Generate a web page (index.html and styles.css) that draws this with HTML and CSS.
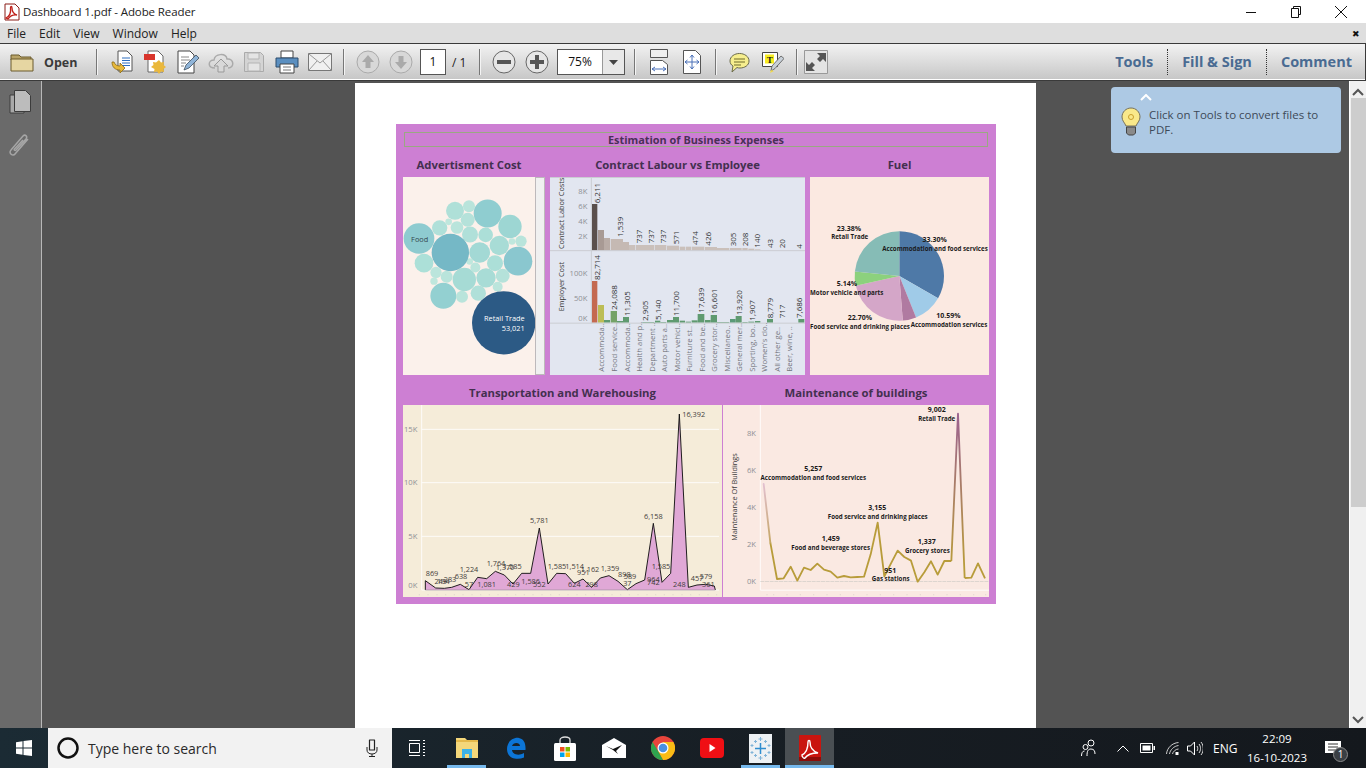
FILE: index.html
```html
<!DOCTYPE html>
<html lang="en">
<head>
    <meta charset="UTF-8">
    <meta name="viewport" content="width=device-width, initial-scale=1.0">
    <title>Dashboard 1.pdf - Adobe Reader</title>
    <link rel="stylesheet" href="styles.css">
</head>
<body>
    <div class="titlebar">
        <svg class="app-icon" viewBox="0 0 16 18" width="16" height="18">
            <path d="M1 1h10l4 4v12H1z" fill="#fff" stroke="#8a1c17"/>
            <path d="M2 15c4-2 5-6 4.500-10 0-2 1.500-2 1.500 0 0 4 2 6 5 7-4-.5-7 1-9 4z" fill="none" stroke="#c0201a" stroke-width="1.300"/>
        </svg>
        <span class="app-title">Dashboard 1.pdf - Adobe Reader</span>
        <div class="window-btns">
            <svg width="12" height="12" viewBox="0 0 12 12"><path d="M1 6.500h10" stroke="#111"/></svg>
            <svg width="12" height="12" viewBox="0 0 12 12"><path d="M3.500 2.500V.5h7v8h-2M1.500 2.500h7v9h-7z" fill="none" stroke="#111"/></svg>
            <svg width="14" height="14" viewBox="0 0 14 14"><path d="M1 1l12 12M13 1L1 13" stroke="#111"/></svg>
        </div>
    </div>

    <div class="menubar">
        <span>File</span><span>Edit</span><span>View</span><span>Window</span><span>Help</span>
        <span class="menu-close">&#10006;</span>
    </div>

    <div class="toolbar">
        <svg class="folder" width="24" height="20" viewBox="0 0 24 20">
            <path d="M1 3h8l2 2h10v3H1z" fill="#b9a468" stroke="#6b5a2c"/>
            <path d="M1 19V7h22v12z" fill="#e6d6a2" stroke="#6b5a2c"/>
        </svg>
        <span class="open-label">Open</span>
        <div class="sep"></div>
        <div class="btn-group first">
            <div class="tb-btn"><svg width="24" height="24" viewBox="0 0 24 24">
                <path d="M8 1h9l5 5v15H8z" fill="#fff" stroke="#555"/>
                <path d="M12 8h8M12 10.500h8M12 13h8M12 15.500h8" stroke="#2f6fc0"/>
                <path d="M2 12c0 5 3 8 8 8v3l5-5-5-5v3c-3 0-5-1-6-4z" fill="#e8b93a" stroke="#8b6a14" stroke-width=".8"/>
            </svg></div>
            <div class="tb-btn"><svg width="24" height="24" viewBox="0 0 24 24">
                <path d="M5 1h10l5 5v16H5z" fill="#fff" stroke="#666"/>
                <path d="M1 4h11v6H1z" fill="#d8352c"/>
                <path d="M16 10l2 2.500 3-.5-.5 3 2.500 2-2.500 2 .5 3-3-.5-2 2.500-2-2.500-3 .5.5-3L8 17l2.500-2-.5-3 3 .5z" fill="#eab83c"/>
            </svg></div>
            <div class="tb-btn"><svg width="24" height="24" viewBox="0 0 24 24">
                <path d="M2 1h12l4 4v18H2z" fill="#fff" stroke="#444"/>
                <path d="M5 7h8M5 10h9M5 13h5M5 16h3" stroke="#888"/>
                <path d="M8 20l2-5L20 5l3 3-10 10z" fill="#8fb4d8" stroke="#3c4c5c" stroke-width=".8"/>
            </svg></div>
            <div class="tb-btn"><svg width="26" height="24" viewBox="0 0 26 24">
                <path d="M7 18c-8 0-7-8-1-8 1-7 12-7 13-1 7-1 8 9 1 9" fill="none" stroke="#aaa" stroke-width="1.500"/>
                <path d="M13 9l-7 7h4v6h6v-6h4z" fill="#d8d8d8" stroke="#999"/>
            </svg></div>
            <div class="tb-btn"><svg width="22" height="24" viewBox="0 0 22 24">
                <path d="M1.500 2.500h16l3 3v16h-19z" fill="#d4d4d4" stroke="#aaa"/>
                <path d="M5 3h11v6H5zM5 13h12v8H5z" fill="#e4e4e4" stroke="#b4b4b4"/>
            </svg></div>
            <div class="tb-btn"><svg width="24" height="24" viewBox="0 0 24 24">
                <path d="M6 1h12v7H6z" fill="#fff" stroke="#444"/>
                <path d="M1 8h22v9H1z" fill="#5b8fc0" stroke="#2c4c6c"/>
                <path d="M5 14h14v9H5z" fill="#fff" stroke="#444"/>
                <path d="M8 17h8M8 20h8" stroke="#777"/>
            </svg></div>
            <div class="tb-btn"><svg width="24" height="18" viewBox="0 0 24 18">
                <path d="M.5.5h23v17H.5z" fill="#f0f0f0" stroke="#777"/>
                <path d="M1 1l11 9 11-9M1 17l8-9M23 17l-8-9" fill="none" stroke="#999"/>
            </svg></div>
        </div>
        <div class="sep"></div>
        <div class="btn-group">
            <div class="tb-btn"><svg width="24" height="24" viewBox="0 0 24 24"><circle cx="12" cy="12" r="11" fill="#d8d8d8" stroke="#aaa"/><path d="M12 5l-6 7h3.500v6h5v-6H18z" fill="#aaa"/></svg></div>
            <div class="tb-btn"><svg width="24" height="24" viewBox="0 0 24 24"><circle cx="12" cy="12" r="11" fill="#d8d8d8" stroke="#aaa"/><path d="M12 19l-6-7h3.500V6h5v6H18z" fill="#aaa"/></svg></div>
        </div>
        <div class="page-box">1</div>
        <span class="page-total">/ 1</span>
        <div class="sep"></div>
        <div class="btn-group">
            <div class="tb-btn"><svg width="24" height="24" viewBox="0 0 24 24"><circle cx="12" cy="12" r="11" fill="#e6e6e6" stroke="#666"/><path d="M5 10h14v4H5z" fill="#555"/></svg></div>
            <div class="tb-btn"><svg width="24" height="24" viewBox="0 0 24 24"><circle cx="12" cy="12" r="11" fill="#e6e6e6" stroke="#666"/><path d="M10 5h4v5h5v4h-5v5h-4v-5H5v-4h5z" fill="#555"/></svg></div>
        </div>
        <div class="zoom-box">
            <span class="zoom-value">75%</span>
            <span class="zoom-arrow"><svg width="9" height="5" viewBox="0 0 9 5"><path d="M0 0h9L4.500 5z" fill="#444"/></svg></span>
        </div>
        <div class="sep"></div>
        <div class="btn-group">
            <div class="tb-btn"><svg width="18" height="26" viewBox="0 0 18 26">
                <path d="M.5.5h17v8H.5z" fill="#eee" stroke="#555"/>
                <path d="M.5 11.500h12l5 4v10H.5z" fill="#fff" stroke="#555"/>
                <path d="M2 20h14M2 20l3-2M2 20l3 2M16 20l-3-2M16 20l-3 2" stroke="#4a70b8" fill="none"/>
            </svg></div>
            <div class="tb-btn"><svg width="18" height="24" viewBox="0 0 18 24">
                <path d="M.5.5h12l5 5v18H.5z" fill="#fff" stroke="#555"/>
                <path d="M9 5v14M2 12h14M9 5L7 7.500M9 5l2 2.500M9 19l-2-2.500M9 19l2-2.500M2 12l2.500-2M2 12l2.500 2M16 12l-2.500-2M16 12l-2.500 2" stroke="#4a70b8" fill="none"/>
            </svg></div>
        </div>
        <div class="sep"></div>
        <div class="btn-group">
            <div class="tb-btn"><svg width="21" height="21" viewBox="0 0 21 21">
                <path d="M10.500 1.500c5 0 9.500 3 9.500 7.500s-4.500 7-9 7c-1 0-2 0-3-.5L3 20l1-6C2 13 1 11 1 9c0-4.500 4.500-7.500 9.500-7.500z" fill="#f6ee8e" stroke="#6a6a4a"/>
                <path d="M5 7h11M5 10h11M5 13h7" stroke="#6f6a2a"/>
            </svg></div>
            <div class="tb-btn"><svg width="22" height="24" viewBox="0 0 22 24">
                <path d="M.5 2.500h15v14H.5z" fill="#fff" stroke="#444"/>
                <path d="M3 4.500h9v9H3z" fill="#f7ec20"/>
                <text x="4.800" y="12.500" class="icon-t">T</text>
                <path d="M9 21l1-5 9-10 3 2.500-9 10z" fill="#c8d0d8" stroke="#555" stroke-width=".8"/>
                <path d="M8 23l1-3 3 1z" fill="#f1d94a"/>
            </svg></div>
        </div>
        <div class="sep"></div>
        <svg class="expand" width="24" height="24" viewBox="0 0 24 24">
            <path d="M.5.5h23v23H.5z" fill="#e4e4e4" stroke="#999"/>
            <path d="M13 3h9v9l-3-3-3 3-3-3 3-3zM11 21H2v-9l3 3 3-3 3 3-3 3z" fill="#555"/>
        </svg>
        <div class="panel-tabs">
            <span class="panel-tab">Tools</span>
            <span class="panel-tab dotted">Fill &amp; Sign</span>
            <span class="panel-tab dotted last">Comment</span>
        </div>
    </div>

    <div class="viewer">
        <div class="sidebar">
            <svg class="side-icon" width="22" height="24" viewBox="0 0 22 24">
                <path d="M1 5h14v18H1z" fill="#a8a8a8" stroke="#3c3c3c"/>
                <path d="M5.500.5h11l5 5v16h-16z" fill="#bcbcbc" stroke="#3c3c3c"/>
            </svg>
            <svg class="side-icon clip" width="22" height="26" viewBox="0 0 22 26">
                <path d="M20 6L7 21c-2 3-7-1-4-4L15 3c2-2 5 0 3 3L8 17c-1 1-2.500 0-1.500-1L15 7" fill="none" stroke="#a6a6a6" stroke-width="1.500"/>
            </svg>
        </div>

        <div class="main">
            <div class="page">
                <div class="dashboard">
                    <div class="dash-title">Estimation of Business Expenses</div>

                    <div class="row-top">
                        <div class="col">
                            <h3>Advertisment Cost</h3>
                            <div class="advert">
                                <svg class="chart" width="132" height="198" viewBox="21 159 396 593">
                                    <circle cx="142" cy="515" r="39" fill="#93d0d1"/>
                                    <circle cx="177" cy="260" r="27" fill="#afe0d8"/>
                                    <circle cx="219" cy="246" r="18" fill="#b9e4db"/>
                                    <circle cx="215" cy="287" r="21" fill="#b5e2da"/>
                                    <circle cx="131" cy="311" r="23" fill="#b0e0d9"/>
                                    <circle cx="158" cy="293" r="10" fill="#bfe7dd"/>
                                    <circle cx="183" cy="310" r="19" fill="#b9e4db"/>
                                    <circle cx="222" cy="331" r="24" fill="#b0e0d9"/>
                                    <circle cx="269" cy="332" r="22" fill="#acdfd8"/>
                                    <circle cx="275" cy="268" r="42" fill="#8fcdd0"/>
                                    <circle cx="342" cy="307" r="35" fill="#9dd6d3"/>
                                    <circle cx="310" cy="364" r="29" fill="#a8dcd6"/>
                                    <circle cx="348" cy="352" r="10" fill="#bfe7dd"/>
                                    <circle cx="375" cy="351" r="17" fill="#b9e4db"/>
                                    <circle cx="251" cy="385" r="31" fill="#a3d9d5"/>
                                    <circle cx="297" cy="417" r="24" fill="#acdfd8"/>
                                    <circle cx="366" cy="411" r="43" fill="#8ac7cf"/>
                                    <circle cx="84" cy="417" r="28" fill="#ace0d8"/>
                                    <circle cx="120" cy="445" r="17" fill="#bbe5dc"/>
                                    <circle cx="152" cy="458" r="18" fill="#b9e4db"/>
                                    <circle cx="114" cy="471" r="11" fill="#bfe7dd"/>
                                    <circle cx="205" cy="466" r="35" fill="#a6dbd5"/>
                                    <circle cx="238" cy="430" r="15" fill="#bbe5dc"/>
                                    <circle cx="221" cy="412" r="10" fill="#bfe7dd"/>
                                    <circle cx="270" cy="461" r="29" fill="#a8dcd6"/>
                                    <circle cx="320" cy="455" r="21" fill="#b5e2da"/>
                                    <circle cx="305" cy="488" r="15" fill="#bbe5dc"/>
                                    <circle cx="247" cy="507" r="23" fill="#b0e0d9"/>
                                    <circle cx="198" cy="518" r="18" fill="#b9e4db"/>
                                    <circle cx="69" cy="343" r="46" fill="#8ecbd0"/>
                                    <circle cx="163" cy="385" r="56" fill="#75b8c6"/>
                                    <circle cx="323" cy="596" r="95" fill="#2c5a85"/>
                                    <text x="71" y="353" class="bubble-label mid">Food</text>
                                    <text x="386" y="591" class="bubble-label end light">Retail Trade</text>
                                    <text x="386" y="621" class="bubble-label end light">53,021</text>
                                </svg>
                                <div class="advert-scroll"></div>
                            </div>
                        </div>

                        <div class="col">
                            <h3>Contract Labour vs Employee</h3>
                            <div class="labour">
                                <svg class="chart" width="255" height="198" viewBox="15 6 765 594">
                                    <g fill="#cac0bb">
                                        <rect x="141" y="87" width="16" height="139" fill="#5a4f4b"/>
                                        <rect x="159" y="165" width="18" height="61" fill="#a89a94"/>
                                        <rect x="177" y="189" width="18" height="37" fill="#b9aca6"/>
                                        <rect x="197" y="192" width="37" height="34" fill="#c5b9b3"/>
                                        <rect x="234" y="201" width="18" height="25" fill="#c5b9b3"/>
                                        <rect x="252" y="210" width="18" height="16"/>
                                        <rect x="272" y="210" width="56" height="16"/>
                                        <rect x="330" y="210" width="34" height="16"/>
                                        <rect x="366" y="212" width="36" height="14"/>
                                        <rect x="404" y="215" width="16" height="11"/>
                                        <rect x="422" y="215" width="16" height="11"/>
                                        <rect x="440" y="215" width="38" height="11"/>
                                        <rect x="480" y="216" width="36" height="10"/>
                                        <rect x="516" y="219" width="37" height="7"/>
                                        <rect x="555" y="219" width="35" height="7"/>
                                        <rect x="592" y="219" width="16" height="7"/>
                                        <rect x="610" y="221" width="18" height="5"/>
                                        <rect x="630" y="223" width="16" height="3"/>
                                    </g>
                                    <g fill="#5f9a70">
                                        <rect x="141" y="318" width="16" height="125" fill="#c4694f"/>
                                        <rect x="159" y="390" width="18" height="53" fill="#bcbd55"/>
                                        <rect x="177" y="435" width="18" height="8"/>
                                        <rect x="197" y="408" width="19" height="35" fill="#74a267"/>
                                        <rect x="216" y="438" width="18" height="5"/>
                                        <rect x="234" y="426" width="18" height="17"/>
                                        <rect x="292" y="441" width="36" height="2"/>
                                        <rect x="330" y="437" width="16" height="6"/>
                                        <rect x="346" y="441" width="18" height="2"/>
                                        <rect x="366" y="435" width="18" height="8"/>
                                        <rect x="384" y="426" width="18" height="17"/>
                                        <rect x="404" y="437" width="16" height="6"/>
                                        <rect x="422" y="440" width="16" height="3"/>
                                        <rect x="440" y="436" width="18" height="7"/>
                                        <rect x="458" y="417" width="20" height="26"/>
                                        <rect x="480" y="435" width="17" height="8"/>
                                        <rect x="497" y="420" width="19" height="23"/>
                                        <rect x="516" y="441" width="37" height="2"/>
                                        <rect x="555" y="432" width="17" height="11" fill="#5a9a78"/>
                                        <rect x="572" y="423" width="18" height="20"/>
                                        <rect x="592" y="441" width="16" height="2"/>
                                        <rect x="610" y="440" width="18" height="3"/>
                                        <rect x="630" y="438" width="16" height="5"/>
                                        <rect x="666" y="432" width="18" height="11"/>
                                        <rect x="760" y="432" width="18" height="11"/>
                                    </g>
                                    <path d="M15 7.500h765M15 227h765M15 444.500h765M139 6v439" stroke="#cbcdd2" stroke-width="3" fill="none"/>
                                    <g class="tick end">
                                        <text x="127" y="58">8K</text><text x="127" y="102">6K</text><text x="127" y="147">4K</text><text x="127" y="192">2K</text>
                                        <text x="127" y="303">100K</text><text x="127" y="378">50K</text><text x="127" y="438">0K</text>
                                    </g>
                                    <g class="axis-title mid">
                                        <text transform="translate(56 115) rotate(-90)">Contract Labor Costs</text>
                                        <text transform="translate(56 335) rotate(-90)">Employer Cost</text>
                                    </g>
                                    <g class="bar-val">
                                        <text transform="translate(165 85) rotate(-90)">6,211</text>
                                        <text transform="translate(233 186) rotate(-90)">1,539</text>
                                        <text transform="translate(290 205) rotate(-90)">737</text>
                                        <text transform="translate(327 205) rotate(-90)">737</text>
                                        <text transform="translate(364 205) rotate(-90)">737</text>
                                        <text transform="translate(402 208) rotate(-90)">571</text>
                                        <text transform="translate(460 210) rotate(-90)">474</text>
                                        <text transform="translate(498 212) rotate(-90)">426</text>
                                        <text transform="translate(574 214) rotate(-90)">305</text>
                                        <text transform="translate(610 214) rotate(-90)">208</text>
                                        <text transform="translate(646 218) rotate(-90)">140</text>
                                        <text transform="translate(685 219) rotate(-90)">43</text>
                                        <text transform="translate(721 220) rotate(-90)">20</text>
                                        <text transform="translate(771 221) rotate(-90)">4</text>
                                        <text transform="translate(165 315) rotate(-90)">82,714</text>
                                        <text transform="translate(216 405) rotate(-90)">24,088</text>
                                        <text transform="translate(255 423) rotate(-90)">11,305</text>
                                        <text transform="translate(310 438) rotate(-90)">2,905</text>
                                        <text transform="translate(347 435) rotate(-90)">5,140</text>
                                        <text transform="translate(402 423) rotate(-90)">11,700</text>
                                        <text transform="translate(478 413) rotate(-90)">17,639</text>
                                        <text transform="translate(516 416) rotate(-90)">16,601</text>
                                        <text transform="translate(592 420) rotate(-90)">13,920</text>
                                        <text transform="translate(629 437) rotate(-90)">1,907</text>
                                        <text transform="translate(685 430) rotate(-90)">8,779</text>
                                        <text transform="translate(721 430) rotate(-90)">717</text>
                                        <text transform="translate(771 429) rotate(-90)">7,686</text>
                                    </g>
                                    <g class="cat-label">
                                        <text transform="translate(178 590) rotate(-90)">Accommoda..</text>
                                        <text transform="translate(216 590) rotate(-90)">Food service..</text>
                                        <text transform="translate(254 590) rotate(-90)">Accommoda..</text>
                                        <text transform="translate(292 590) rotate(-90)">Health and p..</text>
                                        <text transform="translate(329 590) rotate(-90)">Department ..</text>
                                        <text transform="translate(366 590) rotate(-90)">Auto parts a..</text>
                                        <text transform="translate(404 590) rotate(-90)">Motor vehicl..</text>
                                        <text transform="translate(441 590) rotate(-90)">Furniture st..</text>
                                        <text transform="translate(480 590) rotate(-90)">Food and be..</text>
                                        <text transform="translate(517 590) rotate(-90)">Grocery stor..</text>
                                        <text transform="translate(554 590) rotate(-90)">Miscellaneo..</text>
                                        <text transform="translate(592 590) rotate(-90)">General mer..</text>
                                        <text transform="translate(629 590) rotate(-90)">Sporting, bo..</text>
                                        <text transform="translate(666 590) rotate(-90)">Women's clo..</text>
                                        <text transform="translate(704 590) rotate(-90)">All other ge..</text>
                                        <text transform="translate(742 590) rotate(-90)">Beer, wine, ..</text>
                                    </g>
                                </svg>
                            </div>
                        </div>

                        <div class="col">
                            <h3>Fuel</h3>
                            <div class="fuel">
                                <svg class="chart" width="179" height="198" viewBox="30 81 537 594">
                                    <path d="M298 378V244A134 134 0 0 1 414.200 444.800z" fill="#4e79a7"/>
                                    <path d="M298 378L414.200 444.800A134 134 0 0 1 348.200 502.200z" fill="#a0cbe8"/>
                                    <path d="M298 378L348.200 502.200A134 134 0 0 1 308.300 511.600z" fill="#b07aa1"/>
                                    <path d="M298 378L308.300 511.600A134 134 0 0 1 167.300 407.500z" fill="#d4a6c8"/>
                                    <path d="M298 378L167.300 407.500A134 134 0 0 1 164.700 364.500z" fill="#8cd17d"/>
                                    <path d="M298 378L164.700 364.500A134 134 0 0 1 298 244z" fill="#86bcb6"/>
                                    <g class="pie-label mid">
                                        <text x="147" y="242" class="pie-val">23.38%</text>
                                        <text x="149" y="268">Retail Trade</text>
                                        <text x="404" y="275" class="pie-val">33.30%</text>
                                        <text x="405" y="302">Accommodation and food services</text>
                                        <text x="141" y="407" class="pie-val">5.14%</text>
                                        <text x="140" y="434">Motor vehicle and parts</text>
                                        <text x="180" y="509" class="pie-val">22.70%</text>
                                        <text x="180" y="536">Food service and drinking places</text>
                                        <text x="445" y="504" class="pie-val">10.59%</text>
                                        <text x="447" y="530">Accommodation services</text>
                                    </g>
                                </svg>
                            </div>
                        </div>
                    </div>

                    <div class="row-bottom">
                        <div class="col">
                            <h3>Transportation and Warehousing</h3>
                            <div class="transport">
                                <svg class="chart" width="319" height="192" viewBox="9 75 957 576">
                                    <path d="M65 75v555M65 148h892M65 308h892M65 469h892M65 630h892" stroke="#fff" stroke-width="2.500" fill="none"/>
                                    <path class="x-ticks" d="M58 642v4M84 642v4M111 642v4M137 642v4M163 642v4M189 642v4M216 642v4M242 642v4M268 642v4M294 642v4M321 642v4M347 642v4M373 642v4M399 642v4M426 642v4M452 642v4M478 642v4M504 642v4M531 642v4M557 642v4M583 642v4M609 642v4M636 642v4M662 642v4M688 642v4M714 642v4M741 642v4M767 642v4M793 642v4M819 642v4M846 642v4M872 642v4M898 642v4M924 642v4M950 642v4"/>
                                    <path d="M76 630V602L107 624 133 625 155 622 181 613 207 629 233 592 260 596 286 574 313 585 339 612 365 580 392 580 418 444 444 612 470 580 497 581 523 610 549 597 575 622 601 594 627 587 654 604 682 629 708 611 734 600 760 430 786 607 812 580 838 102 865 622 891 615 917 613 943 618 946 630z" fill="#e0a8d6"/>
                                    <path d="M76 630V602L107 624 133 625 155 622 181 613 207 629 233 592 260 596 286 574 313 585 339 612 365 580 392 580 418 444 444 612 470 580 497 581 523 610 549 597 575 622 601 594 627 587 654 604 682 629 708 611 734 600 760 430 786 607 812 580 838 102 865 622 891 615 917 613 943 618 946 630" fill="none" stroke="#111" stroke-width="2.800"/>
                                    <path d="M76 630h870" stroke="#9a8f98" stroke-width="2"/>
                                    <g class="tick end">
                                        <text x="52" y="155">15K</text><text x="52" y="315">10K</text><text x="52" y="476">5K</text><text x="52" y="624">0K</text>
                                    </g>
                                    <g class="area-val mid">
                                        <text x="96" y="588">869</text>
                                        <text x="122" y="611">249</text>
                                        <text x="130" y="611">194</text>
                                        <text x="150" y="605">283</text>
                                        <text x="183" y="596">638</text>
                                        <text x="207" y="576">1,224</text>
                                        <text x="207" y="620">57</text>
                                        <text x="260" y="620">1,081</text>
                                        <text x="288" y="558">1,764</text>
                                        <text x="315" y="569">1,370</text>
                                        <text x="337" y="567">1,585</text>
                                        <text x="340" y="622">429</text>
                                        <text x="392" y="612">1,586</text>
                                        <text x="418" y="620">552</text>
                                        <text x="418" y="429">5,781</text>
                                        <text x="471" y="567">1,585</text>
                                        <text x="524" y="567">1,514</text>
                                        <text x="523" y="620">624</text>
                                        <text x="550" y="585">951</text>
                                        <text x="570" y="577">1,162</text>
                                        <text x="575" y="621">298</text>
                                        <text x="630" y="573">1,359</text>
                                        <text x="673" y="590">898</text>
                                        <text x="690" y="597">589</text>
                                        <text x="682" y="618">37</text>
                                        <text x="760" y="607">964</text>
                                        <text x="760" y="616">742</text>
                                        <text x="760" y="416">6,158</text>
                                        <text x="783" y="567">1,585</text>
                                        <text x="838" y="620">248</text>
                                        <text x="881" y="110">16,392</text>
                                        <text x="891" y="603">457</text>
                                        <text x="918" y="596">579</text>
                                        <text x="925" y="621">361</text>
                                    </g>
                                </svg>
                            </div>
                        </div>
                        <div class="col">
                            <h3>Maintenance of buildings</h3>
                            <div class="maint">
                                <svg class="chart" width="266" height="192" viewBox="9 75 798 576">
                                    <defs>
                                        <linearGradient id="firstSeg" gradientUnits="userSpaceOnUse" x1="0" y1="312" x2="0" y2="560">
                                            <stop offset="0" stop-color="#e2c0d0"/>
                                            <stop offset="1" stop-color="#b89c3a"/>
                                        </linearGradient>
                                        <linearGradient id="peakSeg" gradientUnits="userSpaceOnUse" x1="0" y1="101" x2="0" y2="560">
                                            <stop offset="0" stop-color="#9c6290"/>
                                            <stop offset="1" stop-color="#b89c3a"/>
                                        </linearGradient>
                                    </defs>
                                    <path d="M121 75v555M121 630.500h686" stroke="#fff" stroke-width="2.500" fill="none"/>
                                    <path d="M121 604.500h686" stroke="#cfcac6" stroke-width="2" stroke-dasharray="12 2" fill="none"/>
                                    <path class="x-ticks" d="M141 642v4M161 642v4M201 642v4M241 642v4M281 642v4M321 642v4M361 642v4M401 642v4M441 642v4M481 642v4M521 642v4M561 642v4M601 642v4M641 642v4M681 642v4M721 642v4M761 642v4M797 642v4"/>
                                    <g class="tick end">
                                        <text x="108" y="167">8K</text><text x="108" y="278">6K</text><text x="108" y="389">4K</text><text x="108" y="500">2K</text><text x="108" y="612">0K</text>
                                    </g>
                                    <g class="axis-title mid">
                                        <text transform="translate(50 351) rotate(-90)">Maintenance Of Buildings</text>
                                    </g>
                                    <path d="M151 488L171 597 191 595 212 560 232 602 252 563 272 570 292 551 312 569 332 575 352 593 372 588 392 592 412 591 432 590 452 523 473 428 493 589 513 550 533 512 553 531 573 542 593 605 613 577 633 544 653 584 673 543 694 543M734 594L754 593 774 550 795 595" fill="none" stroke="#b89c3a" stroke-width="5.500" stroke-linejoin="round"/>
                                    <path d="M131 312L151 488" fill="none" stroke="url(#firstSeg)" stroke-width="5.500" stroke-linecap="round"/>
                                    <path d="M694 543L714 101 734 594" fill="none" stroke="url(#peakSeg)" stroke-width="5.500" stroke-linejoin="round"/>
                                    <g class="pie-label mid">
                                        <text x="280" y="273" class="pie-val">5,257</text>
                                        <text x="280" y="299">Accommodation and food services</text>
                                        <text x="472" y="390" class="pie-val">3,155</text>
                                        <text x="473" y="416">Food service and drinking places</text>
                                        <text x="332" y="483" class="pie-val">1,459</text>
                                        <text x="332" y="509">Food and beverage stores</text>
                                        <text x="511" y="579" class="pie-val">951</text>
                                        <text x="512" y="604">Gas stations</text>
                                        <text x="620" y="492" class="pie-val">1,337</text>
                                        <text x="622" y="518">Grocery stores</text>
                                        <text x="650" y="95" class="pie-val">9,002</text>
                                        <text x="650" y="122">Retail Trade</text>
                                    </g>
                                </svg>
                            </div>
                        </div>
                    </div>
                </div>
            </div>
        </div>

        <div class="scrollbar">
            <svg width="12" height="8" viewBox="0 0 12 8"><path d="M1 7l5-5 5 5" fill="none" stroke="#555" stroke-width="2"/></svg>
            <div class="scroll-thumb"></div>
            <svg class="scroll-down" width="12" height="8" viewBox="0 0 12 8"><path d="M1 1l5 5 5-5" fill="none" stroke="#555" stroke-width="2"/></svg>
        </div>

        <div class="tip">
            <svg class="tip-chevron" width="12" height="7" viewBox="0 0 12 7"><path d="M1 6l5-5 5 5" fill="none" stroke="#fff" stroke-width="2"/></svg>
            <svg class="tip-bulb" width="20" height="29" viewBox="0 0 20 29">
                <path d="M10 1c5 0 9 4 9 9 0 4-3 6-4 9H5c-1-3-4-5-4-9 0-5 4-9 9-9z" fill="#f9e88a" stroke="#77715a"/>
                <circle cx="10" cy="10" r="2.500" fill="none" stroke="#c99f2c"/>
                <path d="M5.500 20h9v6l-2 2h-5l-2-2z" fill="#8a8a8a" stroke="#444"/>
            </svg>
            <p>Click on Tools to convert files to PDF.</p>
        </div>
    </div>

    <div class="taskbar">
        <div class="start"><svg width="16" height="16" viewBox="0 0 16 16"><path d="M0 2.300l6.500-1v6.200H0zM7.500 1.100L16 0v7.500H7.500zM0 8.500h6.500v6.200l-6.500-1zM7.500 8.500H16V16l-8.500-1.100z" fill="#fff"/></svg></div>
        <div class="search">
            <svg width="22" height="22" viewBox="0 0 22 22"><circle cx="11" cy="11" r="9.500" fill="none" stroke="#111" stroke-width="2.500"/></svg>
            <span class="search-text">Type here to search</span>
            <svg class="mic" width="12" height="18" viewBox="0 0 12 18"><path d="M3.500 1h5v10h-5z" fill="none" stroke="#222" stroke-width="1.200" stroke-linejoin="round"/><path d="M1 8v3c0 2.500 2 4 5 4s5-1.500 5-4V8M6 15v2.500M3 17.500h6" fill="none" stroke="#222"/></svg>
        </div>
        <div class="task-view"><svg width="16" height="16" viewBox="0 0 16 16"><path d="M.5 3.500h10v9H.5zM0 .5h11M0 15.500h11M14 .5h2M14 3.500h2M14 6.500h2M14 9.500h2M14 12.500h2M14 15.500h2" fill="none" stroke="#fff"/></svg></div>
        <div class="task-app running"><svg width="22" height="22" viewBox="0 0 22 22">
            <path d="M0 1h9l2 2h11v18H0z" fill="#f4d77a"/>
            <path d="M0 3h22v2H0z" fill="#e5b94a"/>
            <path d="M6 12h10v9H6z" fill="#3cb2e8"/>
            <path d="M9 17h4v4H9z" fill="#f4d77a"/>
        </svg></div>
        <div class="task-app"><svg width="20" height="22" viewBox="0 0 20 22">
            <path d="M19.500 13H6c.3 4 6 6.500 12 3v4.500c-7 3-17 1-17-8.500C1 4 8 0 13 1c4 .8 7 4 6.500 12zM6 9h8c0-4-7-4-8 0z" fill="#0c75d6"/>
        </svg></div>
        <div class="task-app"><svg width="22" height="25" viewBox="0 0 22 25">
            <path d="M6 8V4c0-4 10-4 10 0v4" fill="none" stroke="#ddd" stroke-width="1.300"/>
            <rect x="0" y="7" width="22" height="18" rx="1.500" fill="#fff"/>
            <path d="M6 11h4.500v4.500H6z" fill="#f25022"/><path d="M11.500 11H16v4.500h-4.500z" fill="#7fba00"/>
            <path d="M6 16.500h4.500V21H6z" fill="#00a4ef"/><path d="M11.500 16.500H16V21h-4.500z" fill="#ffb900"/>
        </svg></div>
        <div class="task-app"><svg width="24" height="20" viewBox="0 0 24 20">
            <path d="M12 0l12 7v13H0V7z" fill="#fff"/>
            <path d="M4 8l7 3 9-4-6 6 2 3-5-4-7-4z" fill="#111"/>
        </svg></div>
        <div class="task-app"><svg width="24" height="24" viewBox="0 0 24 24">
            <circle cx="12" cy="12" r="12" fill="#e8453c"/>
            <path d="M12 24a12 12 0 0 0 10.400-18H12l-5 9z" fill="#f9bc15"/>
            <path d="M1.600 6L7 15l5 9A12 12 0 0 1 1.600 6z" fill="#2fa44f"/>
            <circle cx="12" cy="12" r="5.500" fill="#fff"/><circle cx="12" cy="12" r="4.300" fill="#4a90e2"/>
        </svg></div>
        <div class="task-app"><svg width="24" height="20" viewBox="0 0 24 20">
            <rect width="24" height="20" rx="4" fill="#f00f14"/>
            <path d="M9.500 6l6 4-6 4z" fill="#fff"/>
        </svg></div>
        <div class="task-app running"><svg width="23" height="29" viewBox="0 0 23 29">
            <path d="M0 0h23v29H0z" fill="#edf1f4"/>
            <path d="M11.500 9v11M6 14.500h11" stroke="#2f8ed0" stroke-width="1.500"/>
            <path d="M11.500 3v4M9.500 5h4M11.500 22v4M9.500 24h4M3 10v3M1.500 11.500h3M20 10v3M18.500 11.500h3M3 17v3M1.500 18.500h3M20 17v3M18.500 18.500h3M6.500 6v3M5 7.500h3M16.500 6v3M15 7.500h3M6.500 20v3M5 21.500h3M16.500 20v3M15 21.500h3" stroke="#80b4d8"/>
        </svg></div>
        <div class="task-app active"><svg width="22" height="26" viewBox="0 0 22 26">
            <rect width="22" height="26" rx="1" fill="#c9150f"/>
            <path d="M0 22h22v4H0z" fill="#8e0d09"/>
            <path d="M3 20c4-2 6-7 6-13 0-2 2-2 2 0 0 5 2 9 8 11-5 0-10 .5-13 5-1 1-3-1-3-3z" fill="none" stroke="#fff" stroke-width="1.400"/>
        </svg></div>

        <div class="tray">
            <svg width="15" height="18" viewBox="0 0 15 18"><circle cx="10" cy="4" r="3" fill="none" stroke="#fff"/><circle cx="4.500" cy="8" r="2.500" fill="none" stroke="#fff"/><path d="M6 17c0-5 1-7 4-7s4 2 4 5M.5 17c0-3 1-5 3-5" fill="none" stroke="#fff"/></svg>
            <svg width="12" height="7" viewBox="0 0 12 7"><path d="M.5 6.500L6 1l5.500 5.500" fill="none" stroke="#fff"/></svg>
            <svg width="15" height="10" viewBox="0 0 15 10"><path d="M.5.5h12v9H.5z" fill="none" stroke="#fff"/><path d="M2.500 2.500h8v5h-8zM13.500 3H15v4h-1.500z" fill="#fff"/></svg>
            <svg width="13" height="13" viewBox="0 0 13 13"><path d="M.5 12C1 6 6 1 12.500.5M3.500 12C4 8 8 4 12.500 3.500M6.500 12c.3-2 3-5 6-5" fill="none" stroke="#ccc"/><path d="M9.500 10h3v3h-3z" fill="#fff"/></svg>
            <svg width="16" height="15" viewBox="0 0 16 15"><path d="M.5 5h3l4-4v13l-4-4h-3z" fill="none" stroke="#fff"/><path d="M10 5c1 1.500 1 3.500 0 5M12 3c2 2.500 2 6.500 0 9M14 1c3 4 3 9 0 13" fill="none" stroke="#ddd"/></svg>
            <span class="lang">ENG</span>
            <div class="clock"><span>22:09</span><span>16-10-2023</span></div>
            <div class="notif">
                <svg width="16" height="15" viewBox="0 0 16 15"><path d="M0 0h16v12h-4l-3 3v-3H0z" fill="#fff"/><path d="M3 3h10M3 6h10M3 9h7" stroke="#333"/></svg>
                <span class="notif-badge">1</span>
            </div>
        </div>
    </div>
</body>
</html>
```

FILE: styles.css
```css
html, body {
    margin: 0;
    padding: 0;
    height: 100%;
    overflow: hidden;
}
body {
    width: 1366px;
    height: 768px;
    display: flex;
    flex-direction: column;
    font-family: "Open Sans", "Liberation Sans", sans-serif;
    background-color: #535353;
}
svg {
    display: block;
    flex: none;
}

/* window title and menu */
.titlebar {
    height: 23px;
    background-color: #ffffff;
    display: flex;
    align-items: center;
    padding-left: 4px;
    font-size: 11.5px;
    letter-spacing: -0.1px;
    color: #222222;
}
.app-title {
    margin-left: 3px;
}
.window-btns {
    margin-left: auto;
    width: 103px;
    display: flex;
    align-items: center;
    justify-content: space-between;
    padding-right: 18px;
}
.menubar {
    height: 20px;
    background-color: #dedede;
    display: flex;
    align-items: center;
    gap: 13px;
    padding-left: 7px;
    font-size: 12px;
    color: #222222;
}
.menu-close {
    margin-left: auto;
    margin-right: 6px;
    font-size: 9px;
    color: #111111;
}

/* toolbar */
.toolbar {
    height: 38px;
    box-sizing: border-box;
    display: flex;
    align-items: center;
    padding-left: 10px;
    background: linear-gradient(#f2f2f2, #c6c6c6);
    border: 1px solid #3a3a3a;
    border-left: none;
    box-shadow: inset 0 -1px 0 #ffffff;
}
.open-label {
    margin-left: 10px;
    margin-right: 12px;
    width: 33px;
    font-size: 12.5px;
    font-weight: 700;
    color: #3a3a3a;
}
.sep {
    width: 1px;
    height: 26px;
    margin: 0 7px;
    background-color: #777777;
    box-shadow: 1px 0 0 #f4f4f4;
}
.btn-group {
    display: flex;
}
.btn-group.first {
    margin-left: 1px;
}
.tb-btn {
    width: 33px;
    display: flex;
    justify-content: center;
    align-items: center;
}
.page-box {
    width: 26px;
    height: 26px;
    margin-left: 3px;
    box-sizing: border-box;
    border: 1px solid #555555;
    background-color: #ffffff;
    text-align: center;
    font-size: 12px;
    line-height: 24px;
    color: #111111;
}
.page-total {
    margin-left: 6px;
    width: 20px;
    font-size: 12px;
    color: #222222;
}
.zoom-box {
    width: 68px;
    height: 26px;
    margin-left: 4px;
    margin-right: 2px;
    box-sizing: border-box;
    border: 1px solid #555555;
    background-color: #ffffff;
    display: flex;
    font-size: 12px;
    line-height: 24px;
    color: #111111;
}
.zoom-value {
    flex: 1;
    text-align: center;
}
.zoom-arrow {
    width: 21px;
    border-left: 1px solid #999999;
    background-color: #e8e8e8;
    display: flex;
    align-items: center;
    justify-content: center;
}
.icon-t {
    font-family: "Liberation Serif", serif;
    font-size: 9px;
    font-weight: 700;
    fill: #222222;
}
.panel-tabs {
    margin-left: auto;
    display: flex;
    align-items: center;
    height: 26px;
}
.panel-tab {
    padding: 0 14px;
    font-size: 14.5px;
    font-weight: 700;
    color: #4a6b92;
    line-height: 26px;
}
.panel-tab.dotted {
    border-left: 1px dotted #333333;
}
.panel-tab.last {
    padding-right: 13px;
}

/* viewer */
.viewer {
    position: relative;
    flex: 1;
    display: flex;
    min-height: 0;
}
.sidebar {
    width: 32px;
    background-color: #6a6a6a;
    border-right: 1px solid #b8b8b8;
    padding-top: 9px;
    padding-left: 9px;
}
.side-icon.clip {
    margin-top: 19px;
    margin-left: -1px;
}
.main {
    flex: 1;
    display: flex;
    justify-content: center;
    padding-top: 2px;
    background-color: #535353;
}
.page {
    width: 681px;
    background-color: #ffffff;
    padding: 41px 0 0 41px;
    box-sizing: border-box;
}
.scrollbar {
    width: 17px;
    box-sizing: border-box;
    border-left: 1px solid #ffffff;
    background-color: #f0f0f0;
    display: flex;
    flex-direction: column;
    align-items: center;
    padding-top: 7px;
}
.scroll-thumb {
    width: 15px;
    height: 409px;
    margin-top: 2px;
    background-color: #cdcdcd;
}
.scroll-down {
    margin-top: auto;
    margin-bottom: 4px;
}

/* tooltip over the viewer */
.tip {
    position: absolute;
    left: 1111px;
    top: 6px;
    width: 230px;
    height: 66px;
    box-sizing: border-box;
    padding: 20px 10px 0 38px;
    background-color: #adc9e4;
    border-radius: 4px;
}
.tip p {
    margin: 0;
    font-size: 11.5px;
    line-height: 15px;
    color: #3d4a58;
}
.tip-chevron {
    position: absolute;
    left: 29px;
    top: 7px;
}
.tip-bulb {
    position: absolute;
    left: 10px;
    top: 20px;
}

/* dashboard on the page */
.dashboard {
    width: 600px;
    height: 480px;
    box-sizing: border-box;
    padding: 8px 7px 7px;
    background-color: #cd7fd3;
    font-family: "Open Sans", sans-serif;
}
.dash-title {
    height: 15px;
    margin: 0 1px 0 1px;
    box-sizing: border-box;
    border: 1px solid #9aa883;
    text-align: center;
    font-size: 10.9px;
    font-weight: 700;
    line-height: 14px;
    color: #4a2f58;
}
.col h3 {
    margin: 0;
    text-align: center;
    font-size: 11.3px;
    font-weight: 700;
    color: #43304f;
}
.row-top {
    display: grid;
    grid-template-columns: 142px 255px 179px;
    column-gap: 5px;
}
.row-top h3 {
    height: 24px;
    margin-top: 6px;
    line-height: 24px;
}
.row-top .col:first-child h3 {
    width: 132px;
}
.row-bottom {
    display: grid;
    grid-template-columns: 319px 266px;
    column-gap: 1px;
}
.row-bottom h3 {
    height: 25px;
    margin-top: 5px;
    line-height: 25px;
}
.advert {
    height: 198px;
    display: flex;
    background-color: #fbf1eb;
}
.advert-scroll {
    width: 10px;
    box-sizing: border-box;
    border: 1px solid #bdb9bb;
    background-color: #f0f0f0;
}
.labour {
    height: 198px;
    background-color: #e2e6f0;
}
.fuel {
    height: 198px;
    background-color: #fbe9e1;
}
.transport {
    height: 192px;
    background-color: #f5ecd9;
}
.maint {
    height: 192px;
    background-color: #fae9e2;
}
.mid {
    text-anchor: middle;
}
.end {
    text-anchor: end;
}
.tick {
    font-size: 23px;
    fill: #8f9096;
}
.axis-title {
    font-size: 22px;
    fill: #3c3c3c;
}
.bar-val {
    font-size: 24px;
    fill: #333333;
}
.cat-label {
    font-size: 23px;
    fill: #74767e;
}
.bubble-label {
    font-size: 22px;
    fill: #33474f;
}
.bubble-label.light {
    fill: #ffffff;
}
.pie-label {
    font-size: 18.5px;
    font-weight: 700;
    fill: #1b1b1b;
}
.pie-val {
    font-size: 21px;
}
.area-val {
    font-size: 22px;
    fill: #433e3b;
}
.x-ticks {
    stroke: #d8d0c8;
    stroke-width: 2;
    fill: none;
}

/* taskbar */
.taskbar {
    height: 40px;
    flex: none;
    display: flex;
    align-items: center;
    background: linear-gradient(90deg, #1b2b34, #171d23 60%, #14181d);
}
.start {
    width: 48px;
    height: 40px;
    display: flex;
    align-items: center;
    justify-content: center;
}
.search {
    width: 344px;
    height: 40px;
    box-sizing: border-box;
    padding-left: 9px;
    display: flex;
    align-items: center;
    background-color: #f2f2f2;
}
.search-text {
    margin-left: 9px;
    font-size: 14px;
    color: #2a2a2a;
}
.mic {
    margin-left: auto;
    margin-right: 14px;
}
.task-view {
    width: 50px;
    display: flex;
    justify-content: center;
}
.task-app {
    position: relative;
    width: 49px;
    height: 40px;
    display: flex;
    align-items: center;
    justify-content: center;
}
.task-app.running::after {
    content: "";
    position: absolute;
    left: 5px;
    right: 5px;
    bottom: 0;
    height: 3px;
    background-color: #76b9ed;
}
.task-app.active {
    background-color: #4a4f53;
}
.task-app.active::after {
    content: "";
    position: absolute;
    left: 0;
    right: 0;
    bottom: 0;
    height: 3px;
    background-color: #76b9ed;
}
.tray {
    margin-left: auto;
    display: grid;
    grid-template-columns: 36px 23px 26px 21px 26px 33px 62px 58px;
    align-items: center;
    color: #ffffff;
    font-size: 12px;
}
.clock {
    display: flex;
    flex-direction: column;
    align-items: center;
    white-space: nowrap;
    line-height: 19px;
    font-size: 11.5px;
}
.notif {
    position: relative;
    margin-left: 17px;
    width: 16px;
}
.notif-badge {
    position: absolute;
    left: 8px;
    top: 6px;
    width: 15px;
    height: 15px;
    border-radius: 50%;
    background-color: #3a3f44;
    border: 1px solid #8a8a8a;
    box-sizing: border-box;
    text-align: center;
    font-size: 10px;
    line-height: 13px;
    color: #ffffff;
}
```
